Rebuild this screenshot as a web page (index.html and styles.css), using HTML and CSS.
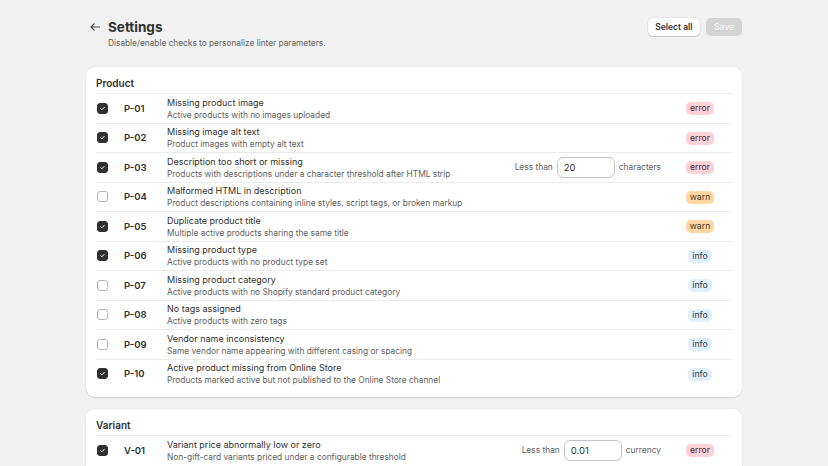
FILE: index.html
```html
<!DOCTYPE html>
<html>
<head>
    <title>Settings</title>
    <link rel="stylesheet" href="styles.css">
</head>
<body>
    <div class="page">
        <div class="page-header">
            <div class="title-wrap">
                <button class="back" aria-label="Back">
                    <svg width="10" height="8" viewBox="0 0 10 8"><path d="M9.5 4H1M4.2 0.8L1 4l3.2 3.2" fill="none" stroke="#4a4a4a" stroke-width="1.2" stroke-linecap="round" stroke-linejoin="round"/></svg>
                </button>
                <div>
                    <h1>Settings</h1>
                    <p class="subtitle">Disable/enable checks to personalize linter parameters.</p>
                </div>
            </div>
            <div class="actions">
                <button class="btn">Select all</button>
                <button class="btn btn-disabled" disabled>Save</button>
            </div>
        </div>

        <div class="card">
            <h2>Product</h2>

            <div class="row">
                <span class="check on"><svg viewBox="0 0 12 12"><path d="M3.6 6.2l1.6 1.6 3.2-3.4" /></svg></span>
                <span class="code">P-01</span>
                <div class="info"><div class="name">Missing product image</div><div class="desc">Active products with no images uploaded</div></div>
                <div class="level"><span class="badge error">error</span></div>
            </div>
            <div class="row">
                <span class="check on"><svg viewBox="0 0 12 12"><path d="M3.6 6.2l1.6 1.6 3.2-3.4" /></svg></span>
                <span class="code">P-02</span>
                <div class="info"><div class="name">Missing image alt text</div><div class="desc">Product images with empty alt text</div></div>
                <div class="level"><span class="badge error">error</span></div>
            </div>
            <div class="row">
                <span class="check on"><svg viewBox="0 0 12 12"><path d="M3.6 6.2l1.6 1.6 3.2-3.4" /></svg></span>
                <span class="code">P-03</span>
                <div class="info"><div class="name">Description too short or missing</div><div class="desc">Products with descriptions under a character threshold after HTML strip</div></div>
                <div class="param"><span>Less than</span><input type="text" value="20"><span>characters</span></div>
                <div class="level"><span class="badge error">error</span></div>
            </div>
            <div class="row">
                <span class="check"></span>
                <span class="code">P-04</span>
                <div class="info"><div class="name">Malformed HTML in description</div><div class="desc">Product descriptions containing inline styles, script tags, or broken markup</div></div>
                <div class="level"><span class="badge warn">warn</span></div>
            </div>
            <div class="row">
                <span class="check on"><svg viewBox="0 0 12 12"><path d="M3.6 6.2l1.6 1.6 3.2-3.4" /></svg></span>
                <span class="code">P-05</span>
                <div class="info"><div class="name">Duplicate product title</div><div class="desc">Multiple active products sharing the same title</div></div>
                <div class="level"><span class="badge warn">warn</span></div>
            </div>
            <div class="row">
                <span class="check on"><svg viewBox="0 0 12 12"><path d="M3.6 6.2l1.6 1.6 3.2-3.4" /></svg></span>
                <span class="code">P-06</span>
                <div class="info"><div class="name">Missing product type</div><div class="desc">Active products with no product type set</div></div>
                <div class="level"><span class="badge note">info</span></div>
            </div>
            <div class="row">
                <span class="check"></span>
                <span class="code">P-07</span>
                <div class="info"><div class="name">Missing product category</div><div class="desc">Active products with no Shopify standard product category</div></div>
                <div class="level"><span class="badge note">info</span></div>
            </div>
            <div class="row">
                <span class="check"></span>
                <span class="code">P-08</span>
                <div class="info"><div class="name">No tags assigned</div><div class="desc">Active products with zero tags</div></div>
                <div class="level"><span class="badge note">info</span></div>
            </div>
            <div class="row">
                <span class="check"></span>
                <span class="code">P-09</span>
                <div class="info"><div class="name">Vendor name inconsistency</div><div class="desc">Same vendor name appearing with different casing or spacing</div></div>
                <div class="level"><span class="badge note">info</span></div>
            </div>
            <div class="row">
                <span class="check on"><svg viewBox="0 0 12 12"><path d="M3.6 6.2l1.6 1.6 3.2-3.4" /></svg></span>
                <span class="code">P-10</span>
                <div class="info"><div class="name">Active product missing from Online Store</div><div class="desc">Products marked active but not published to the Online Store channel</div></div>
                <div class="level"><span class="badge note">info</span></div>
            </div>
        </div>

        <div class="card">
            <h2>Variant</h2>

            <div class="row">
                <span class="check on"><svg viewBox="0 0 12 12"><path d="M3.6 6.2l1.6 1.6 3.2-3.4" /></svg></span>
                <span class="code">V-01</span>
                <div class="info"><div class="name">Variant price abnormally low or zero</div><div class="desc">Non-gift-card variants priced under a configurable threshold</div></div>
                <div class="param"><span>Less than</span><input type="text" value="0.01"><span>currency</span></div>
                <div class="level"><span class="badge error">error</span></div>
            </div>
        </div>
    </div>
</body>
</html>
```

FILE: styles.css
```css
body {
    margin: 0;
    background: #f1f1f1;
    font-family: Inter, "Noto Sans", sans-serif;
    color: #303030;
}

.page {
    width: 656px;
    margin: 0 auto;
    padding: 18px 0 20px;
}

.page-header {
    display: flex;
    justify-content: space-between;
    align-items: flex-start;
}

.title-wrap {
    display: flex;
    align-items: flex-start;
    gap: 7px;
}

.back {
    border: none;
    background: none;
    padding: 0;
    margin: 5px 0 0 4px;
    width: 11px;
    height: 8px;
    display: flex;
}

h1 {
    margin: 0;
    font-size: 13.5px;
    line-height: 18px;
    font-weight: 700;
    color: #303030;
}

.subtitle {
    margin: 1px 0 0;
    font-size: 8.3px;
    line-height: 12px;
    color: #616161;
}

.actions {
    display: flex;
    gap: 6px;
}

.btn {
    font-family: inherit;
    font-size: 8.5px;
    font-weight: 600;
    height: 18px;
    padding: 0 7.5px;
    border: none;
    border-radius: 5px;
    background: white;
    color: #303030;
    box-shadow: 0 1px 0 rgba(0,0,0,0.12), 0 0 0 0.5px rgba(0,0,0,0.1);
}

.btn-disabled {
    width: 36px;
    padding: 0;
    background: #d4d4d4;
    color: #f3f3f3;
    box-shadow: none;
}

.card {
    background: white;
    border-radius: 9px;
    margin-top: 18px;
    padding: 10px 10px 9px;
    box-shadow: 0 1px 0 rgba(0,0,0,0.09), 0 0 0 0.5px rgba(0,0,0,0.05);
}

.card + .card {
    margin-top: 12px;
}

h2 {
    margin: 0;
    padding-bottom: 4px;
    font-size: 10px;
    line-height: 12px;
    font-weight: 600;
}

.row {
    display: flex;
    align-items: center;
    height: 29.5px;
    box-sizing: border-box;
    border-top: 1px solid #ebebeb;
}

.check {
    width: 11px;
    height: 11px;
    margin-left: 1px;
    box-sizing: border-box;
    border: 1px solid #b5b5b5;
    border-radius: 3px;
    background: white;
    flex: none;
}

.check.on {
    background: #303030;
    border-color: #303030;
    display: flex;
}

.check svg {
    width: 100%;
    height: 100%;
    fill: none;
    stroke: white;
    stroke-width: 1.3;
    stroke-linecap: round;
    stroke-linejoin: round;
}

.code {
    width: 43px;
    margin-left: 16px;
    font-size: 9.5px;
    font-weight: 600;
    flex: none;
}

.info {
    flex: 1;
    min-width: 0;
    padding-top: 1px;
}

.name {
    font-size: 9px;
    line-height: 12px;
}

.desc {
    font-size: 8.35px;
    line-height: 12px;
    color: #616161;
}

.param {
    display: flex;
    align-items: center;
    gap: 4px;
    font-size: 8.4px;
    color: #616161;
}

.param input {
    width: 58px;
    height: 21px;
    box-sizing: border-box;
    border: 1px solid #c4c4c4;
    border-radius: 6px;
    padding: 0 6px;
    font-family: inherit;
    font-size: 9.5px;
    color: #303030;
}

.level {
    width: 40px;
    margin: 1px 12px 0 19px;
    display: flex;
    justify-content: center;
    flex: none;
}

.badge {
    font-size: 8.7px;
    line-height: 13px;
    padding: 0 4px;
    border-radius: 5px;
    color: #303030;
}

.badge.error {
    background: #fed1d7;
    color: #4c2a2f;
}

.badge.warn {
    background: #ffd6a4;
    color: #4a3a20;
}

.badge.note {
    background: #e0f0ff;
    color: #2a3a4a;
}
```
